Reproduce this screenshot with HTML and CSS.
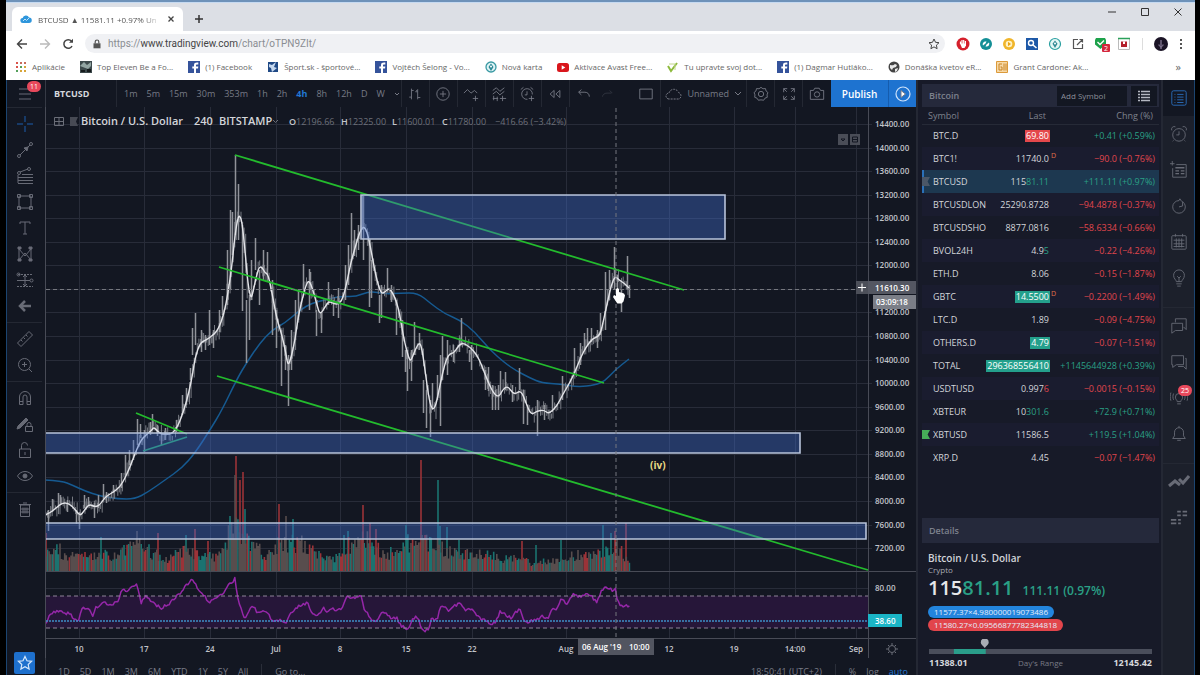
FILE: index.html
```html
<!DOCTYPE html>
<html lang="sk">
<head>
  <meta charset="utf-8">
  <title>BTCUSD ▲ 11581.11 +0.97% Unnamed</title>
  <link rel="stylesheet" href="styles.css">
</head>
<body>
<div class="window">

  <header class="tabstrip">
    <div class="tab">
      <svg width="12" height="12" viewBox="0 0 12 12"><path d="M3 10a2.500 2.500 0 0 1-.3-5A3.300 3.300 0 0 1 9 4.500 2.700 2.700 0 0 1 9 10z" fill="#2f96dc"/><path d="M3 8l2-2 1.500 1.500L9 5" fill="none" stroke="#bfe3fa"/></svg>
      <span class="tab-title">BTCUSD ▲ 11581.11 +0.97% Un</span>
      <button class="plain" aria-label="Close tab"><svg width="8" height="8" viewBox="0 0 8 8"><path d="M1.500 1.500l5 5m0-5l-5 5" stroke="#444" stroke-width="1.300"/></svg></button>
    </div>
    <button class="plain new-tab" aria-label="New tab"><svg width="10" height="10" viewBox="0 0 10 10"><path d="M5 1v8M1 5h8" stroke="#333" stroke-width="1.500"/></svg></button>
    <div class="win-buttons">
      <button class="plain" aria-label="Minimize"><svg width="10" height="10" viewBox="0 0 10 10"><path d="M1 5h8" stroke="#333"/></svg></button>
      <button class="plain" aria-label="Maximize"><svg width="10" height="10" viewBox="0 0 10 10"><path d="M1.500 1.500h7v7h-7z" fill="none" stroke="#333"/></svg></button>
      <button class="plain" aria-label="Close"><svg width="10" height="10" viewBox="0 0 10 10"><path d="M1.500 1.500l7 7m0-7l-7 7" stroke="#333"/></svg></button>
    </div>
  </header>

  <div class="navbar">
    <button class="plain" aria-label="Back"><svg width="12" height="12" viewBox="0 0 12 12"><path d="M11 6H2M6 1.500L1.500 6 6 10.500" fill="none" stroke="#444" stroke-width="1.400"/></svg></button>
    <button class="plain" aria-label="Forward"><svg width="12" height="12" viewBox="0 0 12 12"><path d="M1 6h9M6 1.500L10.500 6 6 10.500" fill="none" stroke="#bbb" stroke-width="1.400"/></svg></button>
    <button class="plain" aria-label="Reload"><svg width="12" height="12" viewBox="0 0 12 12"><path d="M10 8a4.300 4.300 0 1 1-.5-4.800" fill="none" stroke="#444" stroke-width="1.500"/><path d="M11 .8v4H7z" fill="#444"/></svg></button>
    <div class="address">
      <svg width="8" height="10" viewBox="0 0 8 10"><path d="M.5 4.300h7v5h-7z" fill="#555"/><path d="M2.200 4.500V2.800a1.800 1.800 0 0 1 3.600 0v1.700" fill="none" stroke="#555" stroke-width="1.200"/></svg>
      <a href="#chart" class="url">https://<b>www.tradingview.com</b>/chart/oTPN9ZIt/</a>
      <button class="plain star" aria-label="Bookmark this page"><svg width="12" height="12" viewBox="0 0 12 12"><path d="M6 1l1.500 3.300 3.500.4-2.600 2.400.7 3.600L6 8.900l-3.100 1.800.7-3.600L1 4.700l3.500-.4z" fill="none" stroke="#444"/></svg></button>
    </div>
    <div class="extensions">
      <svg viewBox="0 0 14 14"><circle cx="7" cy="7" r="6.500" fill="#d5202c"/><path d="M4.500 7V4.500M6 7V3m1.700 4V3m1.700 4V4" stroke="#fff" stroke-width="1.200"/><path d="M4 6.500h6v2L8.500 11H6z" fill="#fff"/></svg>
      <svg viewBox="0 0 14 14"><circle cx="7" cy="7" r="6" fill="#138f96"/><path d="M4 8.500c-1-2.500 1-4.500 3.500-4l-1 2zM10 5.500c1 2.500-1 4.500-3.500 4l1-2z" fill="#fff"/></svg>
      <svg viewBox="0 0 14 14"><circle cx="7" cy="7" r="6" fill="#f0b52a"/><circle cx="7" cy="7" r="3.300" fill="#fff2c4"/><path d="M6 4.800L9 7 6 9.200z" fill="#eca512"/></svg>
      <svg viewBox="0 0 14 14"><path d="M1 1h12v12H1z" fill="#1d58a7"/><circle cx="6" cy="6" r="2.500" fill="none" stroke="#fff" stroke-width="1.400"/><path d="M8 8l3.500 3" stroke="#fff" stroke-width="1.600"/></svg>
      <svg viewBox="0 0 14 14"><circle cx="7" cy="7" r="5.500" fill="#e4f7f5" stroke="#2a9fa0" stroke-width="1.200"/><path d="M7 3.500l2.500 3.200L7 11 4.500 6.700z" fill="#2f8893"/><circle cx="7" cy="6.500" r="1" fill="#fff"/></svg>
      <svg viewBox="0 0 14 14"><path d="M7 2.500H2.500v9h9V7M8.500 2.500h3v3M11.500 2.500L6 8" fill="none" stroke="#555" stroke-width="1.200"/></svg>
      <svg viewBox="0 0 14 14"><path d="M2 1h9l1 2v4l-5.500 5L1 7.500V3z" fill="#1da24b"/><path d="M3.500 5l2.500 2.500L10 3.500" fill="none" stroke="#fff" stroke-width="1.400"/><rect x="8" y="7" width="8" height="8" rx="1" fill="#d4263c"/><text x="10" y="14" class="ext-num">2</text></svg>
      <svg viewBox="0 0 14 14"><path d="M1.500 1.500h11v11h-11z" fill="#fff" stroke="#bbb"/><path d="M1 1.500h12" stroke="#2aa05a" stroke-width="1.500"/><path d="M4 4.500h6v5.500H4z" fill="#b3202c"/><path d="M6 4.500h2V7H6z" fill="#fff"/></svg>
    </div>
    <span class="nav-sep"></span>
    <svg class="avatar" viewBox="0 0 14 14"><circle cx="7" cy="7" r="7" fill="#1b1426"/><path d="M7 3v6M5 7.500c0 3 4 3 4 0M7 10v2" stroke="#a597b5" fill="none"/></svg>
    <button class="plain" aria-label="Menu"><svg width="4" height="12" viewBox="0 0 4 12"><path d="M1 1h2v2H1zM1 5h2v2H1zM1 9h2v2H1z" fill="#555"/></svg></button>
  </div>

  <nav class="bookmarks">
    <a href="#"><svg viewBox="0 0 12 12"><path d="M1 1h2v2H1zM1 5h2v2H1z" fill="#d9534a"/><path d="M5 1h2v2H5zM9 1h2v2H9z" fill="#c86b5c"/><path d="M5 5h2v2H5zM1 9h2v2H1z" fill="#55a05c"/><path d="M9 5h2v2H9zM5 9h2v2H5zM9 9h2v2H9z" fill="#d7a53a"/></svg>Aplikácie</a>
    <a href="#"><svg viewBox="0 0 12 12"><path d="M0 0h12v12H0z" fill="#3d4a4c"/><path d="M0 5l4-4 3 3 4-3v4L8 8z" fill="#93a6a3"/><path d="M1 9h4v2H1zM7 8h4v3H7z" fill="#151b1c"/></svg>Top Eleven Be a Fo...</a>
    <a href="#"><svg viewBox="0 0 12 12"><path d="M0 0h12v12H0z" fill="#35539b"/><path d="M8 12V7.500h2l.3-2H8V4.400c0-.6.300-1 1-1h1.300V1.600C8 1.200 6 1.800 6 4v1.500H4.300v2H6V12z" fill="#fff"/></svg>(1) Facebook</a>
    <a href="#"><svg viewBox="0 0 12 12"><path d="M1 1h10v10H1z" fill="#204a86"/><path d="M2 3l3 1 4-3-2 5 3 1-5 4-1-4-2-1z" fill="#c5d8ef"/></svg>Šport.sk - športové...</a>
    <a href="#"><svg viewBox="0 0 12 12"><path d="M0 0h12v12H0z" fill="#35539b"/><path d="M8 12V7.500h2l.3-2H8V4.400c0-.6.300-1 1-1h1.300V1.600C8 1.200 6 1.800 6 4v1.500H4.300v2H6V12z" fill="#fff"/></svg>Vojtěch Šelong - Vo...</a>
    <a href="#"><svg viewBox="0 0 12 12"><circle cx="6" cy="6" r="5" fill="#dff4f5" stroke="#3b9aa4" stroke-width="1.300"/><path d="M6 2.500L8.500 6 6 10 3.500 6z" fill="#2b8895"/><circle cx="6" cy="5.500" r="1" fill="#fff"/></svg>Nová karta</a>
    <a href="#"><svg viewBox="0 0 12 12"><rect x="0" y="2" width="12" height="9" rx="2.500" fill="#d9161c"/><path d="M4.700 4.300v4.400L8.300 6.500z" fill="#fff"/></svg>Aktivace Avast Free...</a>
    <a href="#"><svg viewBox="0 0 12 12"><path d="M1 5l3 5 6-8" fill="none" stroke="#8dba3c" stroke-width="2"/><path d="M2 3h6v6" fill="none" stroke="#c2d68e"/></svg>Tu upravte svoj dot...</a>
    <a href="#"><svg viewBox="0 0 12 12"><path d="M0 0h12v12H0z" fill="#35539b"/><path d="M8 12V7.500h2l.3-2H8V4.400c0-.6.300-1 1-1h1.300V1.600C8 1.200 6 1.800 6 4v1.500H4.300v2H6V12z" fill="#fff"/></svg>(1) Dagmar Hutláko...</a>
    <a href="#"><svg viewBox="0 0 12 12"><circle cx="6" cy="6" r="5.500" fill="#444"/><path d="M2 4c2 0 3 1 5-1l2 1-1 2-3 1-1 2-2-2zM7 8l3-1-1 3-2 1z" fill="#e8e8e8"/></svg>Donáška kvetov eR...</a>
    <a href="#"><svg viewBox="0 0 12 12"><path d="M.5.500h11v11H.5z" fill="#f7d9a6" stroke="#dc9a3a"/><path d="M6 3H3v6h3V6H4.500M8 2.500v7M10 2.500v7" fill="none" stroke="#c98426"/></svg>Grant Cardone: Ak...</a>
    <button class="plain more" aria-label="More bookmarks">»</button>
  </nav>

  <main class="app">
    <aside class="tools">
      <button class="tool menu" aria-label="Menu"><svg viewBox="0 0 18 18"><path d="M3 4h12M3 9h12M3 14h12"/></svg><span class="badge">11</span></button>
      <div class="tool-group">
        <button class="tool active" aria-label="Cross"><svg viewBox="0 0 18 18"><path d="M9 1v6M9 11v6M1 9h6M11 9h6"/></svg></button>
        <button class="tool" aria-label="Trend line"><svg viewBox="0 0 18 18"><circle cx="3" cy="15" r="1.500"/><circle cx="15" cy="3" r="1.500"/><path d="M4 14L14 4"/><path d="M8 7l4-1-1 4z" fill="currentColor"/></svg></button>
        <button class="tool" aria-label="Fib retracement"><svg viewBox="0 0 18 18"><circle cx="3" cy="6" r="1.500"/><circle cx="13" cy="2" r="1.500"/><path d="M4 5l8-3M6 7.500h11M2 10.500h15M2 13.500h15M2 16.500h15M2 8v8"/></svg></button>
        <button class="tool" aria-label="Rectangle"><svg viewBox="0 0 18 18"><path d="M3 3h12v12H3z"/><path d="M1.500 1.500h3v3h-3zM13.500 1.500h3v3h-3zM1.500 13.500h3v3h-3zM13.500 13.500h3v3h-3z"/></svg></button>
        <button class="tool" aria-label="Text"><svg viewBox="0 0 18 18"><path d="M4 5V3h10v2M9 3v12M7 15h4"/></svg></button>
        <button class="tool" aria-label="Pattern"><svg viewBox="0 0 18 18"><path d="M3 15V4l6 7 6-7v11L9 8z"/><path d="M2 14h3v2H2zM13 14h3v2h-3zM2 2h3v2H2zM13 2h3v2h-3z" fill="currentColor"/></svg></button>
        <button class="tool" aria-label="Long position"><svg viewBox="0 0 18 18"><path d="M2 3.500h15M1 15.500h16" stroke-dasharray="2 1"/><path d="M1 9.500h13M9 4v11M7 6l2-2 2 2M7 13l2 2 2-2"/><circle cx="15.500" cy="9.500" r="1.500"/><circle cx="2.500" cy="3.500" r="1.500"/></svg></button>
        <button class="tool" aria-label="Arrow"><svg viewBox="0 0 18 18"><path d="M15 9H5M9 4L4 9l5 5" stroke-width="2.500"/></svg></button>
      </div>
      <div class="tool-group">
        <button class="tool" aria-label="Measure"><svg viewBox="0 0 18 18"><path d="M1.500 13L13 1.500 16.500 5 5 16.500zM5 10l1.500 1.500M7.500 7.500L9 9M10 5l1.500 1.500"/></svg></button>
        <button class="tool" aria-label="Zoom in"><svg viewBox="0 0 18 18"><circle cx="8.500" cy="8.500" r="6"/><path d="M6 8.500h5M8.500 6v5M13 13l3 3"/></svg></button>
      </div>
      <div class="tool-group">
        <button class="tool" aria-label="Magnet"><svg viewBox="0 0 18 18"><path d="M3.500 15.500V8a5.500 5.500 0 0 1 11 0v7.500h-3.500V8a2 2 0 0 0-4 0v7.500zM3.500 12.500H7M11 12.500h3.500"/></svg></button>
        <button class="tool" aria-label="Keep drawing"><svg viewBox="0 0 18 18"><path d="M2 11l8-8 2 2-8 8-3 1z" fill="currentColor"/><path d="M9.500 11.500h7v5h-7zM11 11.500V9.500a2 2 0 0 1 4 0v2"/></svg></button>
        <button class="tool" aria-label="Lock drawings"><svg viewBox="0 0 18 18"><path d="M3.500 8h11v8.500h-11zM5.500 8V4.500a3 3 0 0 1 6 0M9 11v3"/></svg></button>
        <button class="tool" aria-label="Hide drawings"><svg viewBox="0 0 18 18"><path d="M1.500 9c3.500-6 11.500-6 15 0-3.500 6-11.500 6-15 0z"/><circle cx="9" cy="9" r="2" fill="currentColor"/></svg></button>
      </div>
      <div class="tool-group">
        <button class="tool" aria-label="Remove drawings"><svg viewBox="0 0 18 18"><path d="M4.500 5h9v11.500h-9zM3 4.500h12M7 3h4M7 7.500v6M9 7.500v6M11 7.500v6M5 9h8M5 12h8"/></svg></button>
      </div>
      <button class="favorite" aria-label="Favorite tools"><svg width="16" height="16" viewBox="0 0 16 16"><path d="M8 1.500l2 4.300 4.600.5-3.400 3.200.9 4.600L8 11.800l-4.100 2.300.9-4.600-3.400-3.200 4.600-.5z" fill="none" stroke="#d7e8fb" stroke-width="1.200"/></svg></button>
    </aside>

    <section class="center">
      <div class="topbar">
        <button class="symbol">BTCUSD</button>
        <div class="intervals">
          <button>1m</button><button>5m</button><button>15m</button><button>30m</button><button>353m</button><button>1h</button><button>2h</button><button class="on">4h</button><button>8h</button><button>12h</button><button>D</button><button>W</button>
          <button aria-label="More intervals"><svg width="6" height="6" viewBox="0 0 6 6"><path d="M1 2l2 2 2-2"/></svg></button>
        </div>
        <button class="cell" aria-label="Bar style"><svg viewBox="0 0 18 18"><path d="M5 3v12M2.500 12.500H5M5 5h2.500M12 4v11M9.500 6.500H12M12 13h3M12 4l-2 2"/></svg></button>
        <button class="cell" aria-label="Compare"><svg viewBox="0 0 18 18"><circle cx="9" cy="9" r="7"/><path d="M5.500 9h7M9 5.500v7"/></svg></button>
        <button class="cell" aria-label="Indicators"><svg viewBox="0 0 18 18"><path d="M1 8l4-4 4 4 4-3 3 3M11 14h6M14 11v6"/></svg></button>
        <button class="cell" aria-label="Templates"><svg viewBox="0 0 18 18"><path d="M2 5l4-3 4 4 5-4M2 9l4-3 4 4 5-4M3 11v5M7 12v5M2 14h6M10 14h7M13 11v6"/></svg></button>
        <button class="cell" aria-label="Alert"><svg viewBox="0 0 18 18"><path d="M9.500 15A6 6 0 1 1 15 9.500M9 6v4H6.500M2 4l3-2.500M13 1.500L16 4M11 14h6M14 11v6"/></svg></button>
        <button class="cell" aria-label="Replay"><svg viewBox="0 0 18 18"><path d="M8 5v8L3.500 9zM14.500 5v8L10 9z"/></svg></button>
        <button class="cell last" aria-label="Undo"><svg viewBox="0 0 18 18"><path d="M3 7h7c3 0 5 2 5 5M6 4L3 7l3 3"/></svg></button>
        <button class="cell faded" aria-label="Redo"><svg viewBox="0 0 18 18"><path d="M14 8H9c-3 0-5 2-5 4M12 5l3 3"/></svg></button>
        <span class="spacer"></span>
        <button class="cell" aria-label="Layout"><svg viewBox="0 0 18 18"><path d="M2 3.500h14v11H2z"/></svg></button>
        <button class="layout-name"><svg width="18" height="14" viewBox="0 0 18 14"><path d="M4 12a3 3 0 0 1 0-6 5 5 0 0 1 9.500-.5A3.500 3.500 0 0 1 14 12z" stroke-dasharray="2 1"/></svg>Unnamed<svg width="8" height="6" viewBox="0 0 8 6"><path d="M1 1l3 3 3-3"/></svg></button>
        <button class="cell" aria-label="Settings"><svg viewBox="0 0 18 18"><path d="M9 1.500l2.200 1.600 2.800-.2.700 2.700 2.100 1.800-1 2.600.3 2.700-2.600 1-1.500 2.300L9 15.600 6 16l-1.500-2.300-2.600-1 .3-2.700-1-2.600 2.100-1.800.7-2.700 2.800.2z"/><circle cx="9" cy="9" r="3"/></svg></button>
        <button class="cell" aria-label="Fullscreen"><svg viewBox="0 0 18 18"><path d="M3 7V3h4M3 3l3.500 3.500M15 7V3h-4M15 3l-3.500 3.500M3 11v4h4M3 15l3.500-3.500M15 11v4h-4M15 15l-3.500-3.500"/></svg></button>
        <button class="cell last" aria-label="Snapshot"><svg viewBox="0 0 18 18"><path d="M1.500 5H5l1.500-2.500h5L13 5h3.500v10h-15z"/><circle cx="9" cy="9.500" r="3"/></svg></button>
        <button class="publish">Publish</button>
        <button class="play" aria-label="Start streaming"><svg width="18" height="18" viewBox="0 0 18 18"><circle cx="9" cy="9" r="7" fill="none" stroke="#cfe3fb" stroke-width="1.200"/><path d="M7 5.500l4.500 3.500L7 12.500z" fill="#fff"/></svg></button>
      </div>

      <svg id="chart" class="chart" viewBox="45 107 871 551">
        <g id="grid" class="grid"></g>
        <rect class="rsi-band" x="46" y="596" width="822" height="32"/>
        <path id="volUp" class="vol-up"/>
        <path id="volDown" class="vol-down"/>
        <path id="volMix" class="vol-mix"/>
        <path id="slowMa" class="slow-ma"/>
        <path id="dimBars" class="dim-bars"/>
        <path id="brightBars" class="bright-bars"/>
        <path id="fastMa" class="fast-ma"/>
        <path class="trend" d="M235 155L684 290M219 267L604 383M217 376L868 570M136 413L187 434"/>
        <path class="trend teal" d="M143 451L187 437"/>
        <path class="zone" d="M361 195h364v44H361z"/>
        <path class="zone" d="M44 433h756v20H44z"/>
        <path class="zone" d="M44 523h822v16H44z"/>
        <path id="rsi" class="rsi"/>
        <path class="band-line" d="M46 596h822M46 628h822"/>
        <path class="rsi-last" d="M46 621h822"/>
        <path class="cross" d="M46 289.500h814M616 108v530"/>
        <path class="edge" d="M45.500 107v551M46 571.500h870M46 638.500h870M868.500 107v551"/>
        <text class="wave" x="650" y="469">(iv)</text>

        <g class="icon-lines">
          <path d="M54.500 117.500h9v8h-9zM59 117.500v8M54.500 121.500h9"/>
          <path d="M70 117h8l-2 4.500 2 4.500h-8z" class="flag"/>
          <path d="M273 120l2.500 2.500 2.500-2.500"/>
        </g>
        <text class="title" x="81" y="125">Bitcoin / U.S. Dollar</text>
        <text class="title" x="194" y="125">240</text>
        <text class="title" x="219" y="125">BITSTAMP</text>
        <g class="ohlc">
          <text x="289" y="125"><tspan class="key">O</tspan>12196.66</text>
          <text x="341" y="125"><tspan class="key">H</tspan>12325.00</text>
          <text x="392" y="125"><tspan class="key">L</tspan>11600.01</text>
          <text x="442" y="125"><tspan class="key">C</tspan>11780.00</text>
          <text x="495" y="125">−416.66 (−3.42%)</text>
        </g>
        <g class="pane-buttons">
          <rect x="838" y="134" width="10" height="11"/><rect x="850" y="134" width="10" height="11"/>
          <path d="M841 139h4l-2 2zM852.500 137h5v5h-5zM852.500 139.500h5"/>
        </g>

        <g id="labels" class="axis"></g>
        <path d="M856 281h13v13h-13z" class="tag-dark"/>
        <path d="M858 287.500h8M862 283.500v8" class="tag-plus"/>
        <path d="M868 281h48v13h-48z" class="tag-mid"/>
        <text class="tag-text" x="875" y="291">11610.30</text>
        <path d="M873 295h43v14h-43z" class="tag-light"/>
        <text class="tag-text" x="876" y="305">03:09:18</text>
        <path d="M868 614h34v13h-34z" class="tag-cyan"/>
        <text class="tag-text" x="875" y="624">38.60</text>
        <path d="M578 638h76v17h-76z" class="tag-time"/>
        <text class="tag-text" x="582" y="650">06 Aug '19</text>
        <text class="tag-text" x="629" y="650">10:00</text>
        <g class="icon-lines"><circle cx="892" cy="649" r="3.500"/><path d="M892 643v2M892 653v2M886 649h2M896 649h2M888 645l1 1M895 652l1 1M888 653l1-1M895 646l1-1"/></g>
        <path class="hand" d="M617 303l-4-6 1-2 2 1v-7l1.500-1 1.500 1v3l5 1.500 1 2-1.500 6-2 2h-4z"/>
      </svg>

      <footer class="bottombar">
        <button>1D</button><button>5D</button><button>1M</button><button>3M</button><button>6M</button><button>YTD</button><button>1Y</button><button>5Y</button><button>All</button>
        <span class="line"></span>
        <button>Go to...</button>
        <span class="spacer"></span>
        <span>18:50:41 (UTC+2)</span>
        <span class="line"></span>
        <button>%</button><button>log</button><button class="on">auto</button>
      </footer>
    </section>

    <aside class="panel">
      <div class="panel-head">
        <h2>Bitcoin</h2>
        <input type="text" placeholder="Add Symbol" aria-label="Add Symbol">
        <button aria-label="Watchlist menu"><svg width="14" height="12" viewBox="0 0 14 12"><path d="M1 1.500h2M4 1.500h9M1 4.500h2M4 4.500h9M1 7.500h2M4 7.500h9M1 10.500h2M4 10.500h9" stroke="#b4b7c1" stroke-width="1.400"/></svg></button>
      </div>
      <table class="watchlist">
        <thead><tr><th>Symbol</th><th>Last</th><th>Chng (%)</th></tr></thead>
        <tbody>
          <tr><td>BTC.D</td><td><mark class="bg-down">69.80</mark></td><td class="up">+0.41 (+0.59%)</td></tr>
          <tr><td>BTC1!</td><td>11740.0<sup>D</sup></td><td class="down">−90.0 (−0.76%)</td></tr>
          <tr class="selected"><td><i class="flag-mark"></i>BTCUSD</td><td>115<span class="up">81.11</span></td><td class="up">+111.11 (+0.97%)</td></tr>
          <tr><td><span class="clip">BTCUSDLONGS</span></td><td>25290.8728</td><td class="down">−94.4878 (−0.37%)</td></tr>
          <tr><td><span class="clip">BTCUSDSHORTS</span></td><td>8877.0816</td><td class="down">−58.6334 (−0.66%)</td></tr>
          <tr><td>BVOL24H</td><td>4.9<span class="up">5</span></td><td class="down">−0.22 (−4.26%)</td></tr>
          <tr><td>ETH.D</td><td>8.06</td><td class="down">−0.15 (−1.87%)</td></tr>
          <tr><td>GBTC</td><td><mark class="bg-up">14.5500</mark><sup>D</sup></td><td class="down">−0.2200 (−1.49%)</td></tr>
          <tr><td>LTC.D</td><td>1.89</td><td class="down">−0.09 (−4.75%)</td></tr>
          <tr><td>OTHERS.D</td><td><mark class="bg-up">4.79</mark></td><td class="down">−0.07 (−1.51%)</td></tr>
          <tr><td>TOTAL</td><td><mark class="bg-up">296368556410</mark></td><td class="up">+1145644928 (+0.39%)</td></tr>
          <tr><td>USDTUSD</td><td>0.997<span class="down">6</span></td><td class="down">−0.0015 (−0.15%)</td></tr>
          <tr><td>XBTEUR</td><td>10<span class="up">301.6</span></td><td class="up">+72.9 (+0.71%)</td></tr>
          <tr><td><i class="flag-mark green"></i>XBTUSD</td><td>11586.5</td><td class="up">+119.5 (+1.04%)</td></tr>
          <tr><td>XRP.D</td><td>4.45</td><td class="down">−0.07 (−1.47%)</td></tr>
        </tbody>
      </table>
      <div class="details">
        <h2>Details</h2>
        <h3>Bitcoin / U.S. Dollar</h3>
        <p class="kind">Crypto</p>
        <p class="price">115<span class="up">81.11</span><small class="up">111.11 (0.97%)</small></p>
        <span class="pill bid">11577.37×4.980000019073486</span>
        <span class="pill ask">11580.27×0.09566877782344818</span>
        <svg class="range" viewBox="0 0 224 16" preserveAspectRatio="none"><path d="M0 10h224v5H0z" fill="#4a4e5b"/><path d="M25 10h32v5H25z" fill="#2a9d8a"/><path d="M52 3.500a3.500 3.500 0 0 1 8 0c0 2-2 3-4 5.500-2-2.500-4-3.500-4-5.500z" fill="#a9acb4"/></svg>
        <div class="range-labels"><b>11388.01</b><span>Day's Range</span><b>12145.42</b></div>
      </div>
    </aside>

    <aside class="rail">
      <div>
        <button class="on" aria-label="Watchlist"><svg viewBox="0 0 20 20"><rect x="2" y="2" width="16" height="16" rx="2"/><path d="M5 6h1M8 6h7M5 9h1M8 9h7M5 12h1M8 12h7M5 15h1M8 15h7"/></svg></button>
        <button aria-label="Alerts"><svg viewBox="0 0 20 20"><circle cx="10" cy="11" r="7"/><path d="M10 7v4H7M2 6a3 3 0 0 1 4-4M18 6a3 3 0 0 0-4-4M4 17l-1 1M16 17l1 1"/></svg></button>
        <button aria-label="News"><svg viewBox="0 0 20 20"><path d="M7 4h11v14H3V8" /><path d="M6 7.500h10M6 11h4M6 14h4M12 11h4M12 14h4" stroke-width="1.500"/><path d="M0 3h5M2.500 0v5"/></svg></button>
        <button aria-label="Hotlists"><svg viewBox="0 0 20 20"><path d="M10 4a7 7 0 1 0 7 7M10 4l1-2 2 3M17 11c0-3-2-5-3-6v5l-4 1"/></svg></button>
        <button aria-label="Calendar"><svg viewBox="0 0 20 20"><rect x="2" y="3" width="16" height="15" rx="1"/><path d="M6 1v3M14 1v3M4 8h12M4 12h12M4 15h12M7 6v10M10 6v10M13 6v10"/></svg></button>
        <button aria-label="Ideas"><svg viewBox="0 0 20 20"><path d="M7 14c0-2-3-3-3-7a6 6 0 0 1 12 0c0 4-3 5-3 7zM7 16.500h6M8 19h4M8 8l2 2 2-2M10 10v4"/></svg></button>
      </div>
      <div>
        <button aria-label="Public chats"><svg viewBox="0 0 20 20"><path d="M6 6V2h12v12l-3-3M2 7h12v8H6l-4 3z"/></svg></button>
        <button aria-label="Private chats"><svg viewBox="0 0 20 20"><path d="M2 3h13v10H7l-4 3v-3H2zM17 6h1v12l-3-3H9"/></svg></button>
        <button aria-label="Ideas stream"><svg viewBox="0 0 20 20"><path d="M8 14c0-2-2-2-2-5a4 4 0 0 1 8 0c0 3-2 3-2 5zM8 16.500h4M4 5c-1 2-1 5 0 7M1 4c-1 3-1 6 0 9M16 5c1 2 1 5 0 7M19 4c1 3 1 6 0 9"/></svg><span class="badge">25</span></button>
        <button aria-label="Notifications"><svg viewBox="0 0 20 20"><path d="M3 15h14l-2-3V8a5 5 0 0 0-10 0v4zM8 17h4M10 1v2"/></svg></button>
      </div>
      <div>
        <button class="big" aria-label="Order panel"><svg viewBox="0 0 22 20"><path d="M1 14l6-5 5 4M11 7l4 4 6-7" stroke-width="3"/></svg></button>
        <button aria-label="Depth of market"><svg viewBox="0 0 20 20"><path d="M8 3h4M14 3h5M8 7h4M14 7h5M1 12h6M9 12h3M1 16h6M9 16h3" stroke-width="2"/></svg></button>
      </div>
    </aside>
  </main>
</div>
<script src="chart.js"></script>
</body>
</html>
```
FILE: styles.css
```css
* { box-sizing: border-box; }
body {
  margin: 0;
  background: #000;
  font-family: "Open Sans", "Noto Sans", sans-serif;
  font-size: 9px;
  overflow: hidden;
}
button {
  font: inherit;
  color: inherit;
  background: none;
  border: 0;
  padding: 0;
}
svg { display: block; flex: none; }
h2, h3, p { margin: 0; }
.window {
  display: flex;
  flex-direction: column;
  height: 100vh;
  margin: 0 5px 0 6px;
  background: #131722;
  border-top: 2px solid #6e92b9;
}
.plain { display: flex; align-items: center; }

/* browser frame */
.tabstrip {
  display: flex;
  height: 29px;
  flex: none;
  padding: 4px 12px 0 6px;
  background: #dcdfe5;
  border-top: 1px solid #c6daf1;
}
.tab {
  display: flex;
  align-items: center;
  gap: 6px;
  width: 171px;
  padding: 0 8px;
  background: #fff;
  border-radius: 6px 6px 0 0;
}
.tab-title {
  flex: 1;
  white-space: nowrap;
  color: #555;
  font-size: 8px;
  mask-image: linear-gradient(90deg, #000 85%, transparent);
}
.new-tab { margin-left: 11px; }
.win-buttons {
  display: flex;
  align-items: flex-start;
  gap: 23px;
  margin-left: auto;
}
.navbar {
  display: flex;
  align-items: center;
  gap: 11px;
  height: 25px;
  flex: none;
  padding: 0 12px 0 10px;
  background: #fff;
}
.address {
  display: flex;
  align-items: center;
  gap: 7px;
  flex: 1;
  height: 19px;
  padding: 0 5px 0 8px;
  border-radius: 10px;
  background: #f0f1f4;
}
.url {
  color: #8a8d92;
  font-family: Roboto, sans-serif;
  font-size: 10px;
  text-decoration: none;
}
.url b { color: #444; font-weight: 400; }
.star { margin-left: auto; }
.extensions { display: flex; gap: 9px; }
.extensions svg { width: 14px; height: 14px; overflow: visible; }
.ext-num { font-size: 7px; fill: #fff; }
.nav-sep { width: 1px; height: 12px; background: #ddd; }
.avatar { width: 14px; height: 14px; }
.bookmarks {
  display: flex;
  align-items: center;
  justify-content: space-between;
  height: 24px;
  flex: none;
  padding: 0 14px 3px 9px;
  background: #fff;
  font-size: 8px;
  color: #666;
}
.bookmarks a {
  display: flex;
  align-items: center;
  gap: 5px;
  color: inherit;
  text-decoration: none;
  white-space: nowrap;
}
.bookmarks svg { width: 12px; height: 12px; }
.more { margin-left: 72px; font-size: 11px; }

/* app */
.app {
  display: flex;
  flex: 1;
  min-height: 0;
  border: solid #1c4570;
  border-width: 0 1px;
  color: #787b86;
}
.app svg { fill: none; stroke: currentColor; stroke-width: 1; }
.badge {
  position: absolute;
  top: 1px;
  right: 1px;
  padding: 0 3px;
  border-radius: 6px;
  background: #e8495c;
  color: #fff;
  font-size: 7px;
  line-height: 11px;
}
.tools {
  display: flex;
  flex-direction: column;
  width: 38px;
  flex: none;
  padding-right: 3px;
  color: #686b76;
}
.tool {
  position: relative;
  display: flex;
  align-items: center;
  justify-content: center;
  height: 26px;
  width: 100%;
}
.tool svg { width: 18px; height: 18px; }
.tool.active { color: #1c5fae; }
.menu { height: 28px; border-bottom: 1px solid #242833; }
.tool-group { padding: 3px 0; border-bottom: 1px solid #242833; }
.tool-group:nth-last-child(2) { border: 0; }
.favorite {
  display: flex;
  align-items: center;
  justify-content: center;
  width: 21px;
  height: 22px;
  margin: auto auto 1px 7px;
  border-radius: 2px;
  background: #1e70cd;
}
.center {
  display: flex;
  flex-direction: column;
  flex: 1;
  min-width: 0;
  overflow: hidden;
}
.topbar {
  display: flex;
  align-items: stretch;
  height: 27px;
  flex: none;
  white-space: nowrap;
  border-left: 1px solid #363a45;
}
.symbol {
  width: 71px;
  padding-left: 8px;
  border-right: 1px solid #242833;
  color: #d5d7dc;
  font-weight: 700;
  text-align: left;
}
.intervals {
  display: flex;
  gap: 9px;
  padding: 0 1px 0 7px;
  border-right: 1px solid #242833;
}
.intervals .on { color: #2277d4; font-weight: 700; }
.cell {
  display: flex;
  align-items: center;
  justify-content: center;
  width: 28px;
  border-right: 1px solid #242833;
}
.cell svg { width: 16px; height: 16px; }
.last, .faded { border: 0; }
.faded { width: 18px; opacity: .3; }
.spacer { flex: 1; }
.layout-name {
  display: flex;
  align-items: center;
  gap: 5px;
  padding: 0 4px;
  border-right: 1px solid #242833;
}
.publish {
  width: 57px;
  background: #1e73d0;
  color: #fff;
  font-size: 10px;
  font-weight: 600;
}
.play {
  display: flex;
  align-items: center;
  justify-content: center;
  width: 28px;
  border-left: 1px solid #155cae;
  background: #1e73d0;
}

/* chart */
.chart { width: 100%; height: auto; }
.chart path, .chart text, .chart rect { stroke: none; }
.chart .grid path { stroke: #282c39; }
.chart .rsi-band { fill: #261639; }
.chart .vol-up { stroke: #1b7370; stroke-width: 1.600; }
.chart .vol-down { stroke: #9b3338; stroke-width: 1.600; }
.chart .vol-mix { stroke: #584d4d; stroke-width: 1.600; }
.chart .slow-ma { stroke: #165a91; stroke-width: 1.500; }
.chart .dim-bars { stroke: #777a82; }
.chart .bright-bars { stroke: #909299; stroke-width: 1.500; }
.chart .fast-ma { stroke: #e3e4e8; stroke-width: 1.400; stroke-linejoin: round; }
.chart .trend { stroke: #23bb2d; stroke-width: 1.800; }
.chart .teal { stroke: #28a566; }
.chart .zone { fill: #426ece; fill-opacity: .4; stroke: #b8c3da; stroke-width: 1.600; }
.chart .rsi { stroke: #9527a8; stroke-width: 1.500; stroke-linejoin: round; }
.chart .band-line { stroke: #8f8499; stroke-dasharray: 4 3; }
.chart .rsi-last { stroke: #3e8fc6; stroke-width: 1.500; stroke-dasharray: 2 1; }
.chart .cross { stroke: #75777e; stroke-dasharray: 4 3; }
.chart .edge { stroke: #484b56; }
.chart .wave { fill: #ecdd86; font-size: 10px; font-weight: 700; }
.title { fill: #d3d5da; font-size: 11px; font-weight: 600; }
.ohlc { fill: #6d707a; font-size: 9px; }
.key { fill: #c4c6cc; font-weight: 600; }
.chart .icon-lines path, .chart .icon-lines circle { stroke: #6b6e78; }
.chart .icon-lines .flag { fill: #474a54; stroke: none; }
.pane-buttons rect { fill: #4a4d57; }
.chart .pane-buttons path { stroke: #131722; }
.axis { fill: #c2c4ca; font-size: 8px; font-weight: 600; }
.axis .mid { text-anchor: middle; }
.tag-text { fill: #fff; font-size: 8px; font-weight: 600; }
.tag-dark { fill: #4c4f59; }
.chart .tag-plus { stroke: #fff; }
.tag-mid { fill: #545762; }
.tag-light { fill: #7b7e87; }
.tag-cyan { fill: #1ab5c6; }
.tag-time { fill: #525560; }
.hand { fill: #fff; }

.bottombar {
  display: flex;
  align-items: center;
  gap: 10px;
  height: 26px;
  flex: none;
  padding: 0 8px 0 12px;
  border-left: 1px solid #363a45;
  white-space: nowrap;
}
.bottombar .on { color: #2277d4; }
.line { width: 1px; height: 14px; margin: 0 3px; background: #2a2e39; }

/* right panel */
.panel {
  display: flex;
  flex-direction: column;
  width: 247px;
  flex: none;
  padding: 4px 2px 0 4px;
  background: #171a28;
  border: solid #242834;
  border-width: 0 2px;
}
.panel-head {
  display: flex;
  align-items: center;
  gap: 4px;
  height: 23px;
  flex: none;
  padding: 1px 2px 1px 7px;
  background: #25293b;
}
.panel h2 { flex: 1; color: #7d818d; font-size: 9px; font-weight: 600; }
.panel-head input {
  width: 70px;
  height: 20px;
  padding: 0 4px;
  border: 0;
  background: #131722;
  color: #b2b5be;
  font: inherit;
  font-size: 8px;
}
.panel-head input::placeholder { color: #8d909a; }
.panel-head button {
  display: flex;
  align-items: center;
  justify-content: center;
  width: 26px;
  height: 20px;
  background: #131722;
}
.watchlist {
  width: 100%;
  border-collapse: collapse;
  table-layout: fixed;
  white-space: nowrap;
}
.watchlist th {
  height: 17px;
  padding: 0 6px;
  border-bottom: 1px solid #262a37;
  color: #7f828d;
  font-weight: 400;
  text-align: right;
}
.watchlist th:first-child { width: 64px; text-align: left; }
.watchlist th:nth-child(2) { width: 70px; padding-right: 10px; }
.watchlist td {
  position: relative;
  height: 23px;
  padding: 0 4px 0 0;
  text-align: right;
  color: #d3d5da;
}
.watchlist td:first-child { padding: 0 0 0 11px; text-align: left; }
.watchlist td:nth-child(2) { padding-right: 7px; }
.watchlist tbody tr:nth-child(even) { background: #1a1c2f; }
.watchlist .selected { background: #1d3850; box-shadow: inset 2px 0 #2b70b8; }
.clip { display: block; overflow: hidden; }
.watchlist sup {
  position: absolute;
  top: 5px;
  right: 0;
  color: #e0704a;
  font-size: 7px;
  line-height: 8px;
}
mark {
  display: inline-block;
  margin-right: -1px;
  padding: 0 1px;
  color: #fff;
  line-height: 12px;
}
.bg-down { background: #e4484b; }
.bg-up { background: #24a08c; }
.panel .up { color: #2aa086; }
.panel .down { color: #e0464d; }
.flag-mark {
  position: absolute;
  top: 7px;
  left: 0;
  width: 8px;
  height: 9px;
  background: #4b5767;
  clip-path: polygon(0 0, 100% 0, 70% 50%, 100% 100%, 0 100%);
}
.flag-mark.green { background: #46ad58; }
.details { margin-top: auto; }
.details h2 {
  height: 25px;
  padding-left: 7px;
  background: #25293b;
  line-height: 25px;
}
.details h3 {
  margin: 8px 6px 0;
  color: #d1d3d8;
  font-size: 10px;
  font-weight: 600;
  line-height: 14px;
}
.kind { margin: 0 6px; color: #a8abb3; font-size: 8px; line-height: 10px; }
.price {
  margin: 0 6px 2px;
  color: #e6e7ea;
  font-size: 20px;
  font-weight: 600;
  line-height: 26px;
}
.price small { margin-left: 9px; font-size: 12px; }
.pill {
  display: block;
  width: fit-content;
  margin: 0 6px 1px;
  padding: 0 6px;
  border-radius: 6px;
  color: #e4eefb;
  font-size: 8px;
  line-height: 12px;
}
.bid { background: #2385dd; }
.ask { background: #e2454b; }
.panel .range { width: calc(100% - 14px); height: 16px; margin: 8px 7px 0; stroke: none; }
.range-labels {
  display: flex;
  justify-content: space-between;
  margin: 0 7px;
  padding-bottom: 5px;
  font-size: 8px;
  line-height: 15px;
}
.range-labels b { color: #d5d7dc; font-size: 9px; }

.rail { width: 31px; flex: none; background: #1c202b; color: #686b76; }
.rail div + div { margin-top: 11px; border-top: 1px solid #242833; }
.rail button {
  position: relative;
  display: flex;
  align-items: center;
  justify-content: center;
  width: 100%;
  height: 36px;
}
.rail svg { width: 18px; height: 18px; }
.rail .big svg { width: 22px; height: 20px; }
.rail .badge { top: 5px; right: 2px; }
.rail .on { background: #131722; color: #2a6fc0; }
```
FILE: chart.js
```js
const $ = id => document.getElementById(id);

// average price line
const fast = [[45,515],[50,513],[56,508],[62,503],[68,503],[74,508],[80,516],[84,511],[89,504],[95,507],[100,505],[105,497],[112,493],[120,487],[125,478],[130,467],[136,451],[141,440],[146,435],[152,430],[154,427],[160,434],[166,434],[172,434],[178,426],[184,410],[189,392],[193,372],[195,358],[200,343],[206,340],[212,336],[218,330],[224,314],[228,293],[232,265],[235,235],[238,217],[240,216],[242,222],[245,250],[248,285],[251,299],[253,292],[256,278],[259,267],[262,267],[265,273],[268,274],[272,293],[277,320],[282,335],[286,354],[288,366],[291,358],[295,340],[298,318],[302,300],[306,285],[309,280],[313,290],[317,305],[320,315],[325,307],[329,301],[334,304],[339,304],[343,298],[347,282],[351,262],[355,248],[359,234],[363,226],[367,231],[371,250],[376,277],[381,294],[385,292],[389,288],[394,295],[399,310],[404,340],[409,359],[411,361],[415,350],[420,341],[423,355],[427,385],[430,404],[433,410],[436,405],[440,385],[445,363],[449,354],[454,353],[459,345],[463,343],[470,347],[477,355],[482,366],[488,382],[494,394],[499,397],[503,389],[508,386],[514,395],[521,390],[526,403],[531,415],[537,411],[544,410],[549,414],[557,406],[563,394],[569,384],[575,372],[580,359],[586,347],[593,338],[600,336],[604,318],[608,300],[611,286],[615,276],[619,280],[624,283],[629,288]];
const slow = [[45,480],[62,481],[72,485],[85,491],[100,496],[118,499],[135,499],[148,492],[165,480],[182,468],[195,453],[210,430],[222,410],[237,379],[247,362],[260,343],[272,330],[285,323],[300,310],[312,303],[325,300],[340,296],[355,297],[370,291],[385,294],[400,293],[418,293],[430,303],[445,314],[460,320],[475,332],[490,350],[505,363],[515,370],[530,378],[542,383],[560,384],[578,387],[595,385],[605,381],[615,370],[629,359]];
// x, high, low
const wicks = [[48,510,531],[52,499,512],[58,493,508],[60,495,505],[67,500,512],[76,510,524],[79,512,529],[84,495,508],[88,497,506],[94,503,518],[98,495,508],[103,484,500],[106,492,503],[113,485,493],[121,473,488],[125,455,475],[129,450,465],[133,440,460],[137,419,445],[140,424,438],[144,430,452],[150,422,435],[152,414,430],[157,425,436],[161,433,445],[165,428,440],[176,420,432],[182,395,415],[186,388,405],[190,368,380],[192,328,355],[195,313,345],[201,330,352],[205,335,350],[209,310,345],[213,330,348],[219,310,332],[222,296,315],[227,250,305],[230,210,290],[232,212,255],[235,155,235],[238,184,240],[242,225,311],[246,300,363],[249,295,340],[251,260,300],[255,238,270],[259,270,305],[263,250,280],[267,252,275],[272,280,335],[276,310,348],[281,330,386],[285,345,370],[288,355,406],[291,330,370],[295,300,340],[298,290,320],[303,264,290],[309,269,310],[310,272,290],[316,310,336],[321,312,333],[328,282,305],[333,300,316],[338,288,318],[345,265,300],[348,245,285],[351,213,260],[354,230,256],[358,225,250],[362,195,230],[363,196,260],[369,240,307],[371,260,298],[379,295,323],[381,285,318],[387,268,290],[391,285,302],[396,300,335],[402,320,357],[405,350,372],[407,350,391],[411,350,381],[414,322,355],[419,333,350],[423,380,413],[426,390,428],[430,400,437],[432,383,410],[437,375,400],[440,355,426],[442,336,380],[447,340,375],[453,345,362],[459,338,352],[461,318,345],[469,350,362],[471,345,370],[485,370,390],[488,367,391],[492,385,410],[495,390,410],[498,385,410],[500,371,395],[505,372,390],[512,385,402],[519,368,390],[523,390,424],[527,405,425],[537,400,436],[544,405,420],[552,395,412],[562,376,400],[574,348,375],[580,343,365],[584,333,350],[587,328,345],[591,328,342],[597,330,348],[600,313,335],[605,272,330],[609,270,300],[614,247,290],[617,275,300],[621,290,312],[627,256,290],[629,285,298]];
const rsi = [[46,624],[49,617],[54,612],[60,610],[66,613],[70,614],[74,618],[78,623],[82,609],[88,608],[93,617],[96,607],[99,608],[103,600],[108,604],[114,604],[118,600],[123,588],[127,593],[132,586],[134,588],[137,582],[141,604],[145,596],[149,599],[153,602],[157,606],[162,608],[166,605],[170,603],[176,597],[181,593],[186,586],[191,580],[195,583],[199,591],[205,596],[209,603],[213,600],[219,597],[223,593],[228,585],[233,582],[235,577],[237,595],[241,608],[245,620],[250,609],[254,606],[257,614],[261,611],[267,612],[272,621],[278,620],[283,622],[286,624],[290,613],[297,607],[302,604],[308,603],[312,614],[317,616],[324,608],[327,612],[333,609],[338,611],[342,607],[347,597],[350,599],[356,598],[361,596],[364,608],[368,615],[372,620],[377,622],[381,614],[386,613],[391,618],[397,618],[401,626],[408,629],[413,618],[418,617],[421,627],[424,632],[429,629],[431,619],[437,620],[441,606],[445,607],[449,611],[454,606],[458,604],[460,602],[465,610],[472,610],[477,615],[481,620],[486,620],[490,626],[496,621],[500,612],[506,615],[511,618],[517,611],[520,609],[524,623],[530,621],[537,620],[542,615],[548,620],[552,608],[556,610],[561,600],[567,603],[573,594],[579,597],[585,594],[591,596],[597,602],[602,590],[608,587],[613,592],[615,585],[617,599],[620,606],[626,606],[629,607]];
// x, usual volume height
const volume = [[45,25],[60,22],[75,14],[90,16],[105,17],[120,18],[137,28],[150,22],[165,12],[185,22],[200,16],[215,16],[230,42],[240,48],[250,30],[265,18],[280,33],[300,30],[310,22],[320,18],[335,13],[350,30],[370,35],[385,14],[400,28],[420,32],[435,28],[460,18],[480,20],[500,15],[520,13],[535,8],[560,14],[580,19],[600,18],[615,28],[629,12]];
// x, height, u(p) / d(own) / m(ixed)
const spikes = [[46,38,'d'],[101,34,'u'],[124,26,'u'],[137,40,'m'],[158,38,'d'],[186,36,'u'],[195,42,'d'],[208,30,'d'],[230,55,'u'],[235,96,'m'],[236,115,'d'],[240,91,'d'],[243,99,'d'],[245,62,'u'],[279,67,'d'],[286,55,'m'],[293,52,'u'],[344,36,'u'],[348,40,'u'],[363,66,'d'],[370,48,'d'],[376,42,'d'],[406,46,'u'],[421,111,'d'],[438,91,'u'],[440,45,'u'],[447,44,'u'],[459,31,'u'],[522,30,'d'],[536,26,'u'],[561,31,'u'],[603,46,'u'],[611,38,'u'],[615,40,'d'],[626,48,'d']];

let seed = 11;
const rand = () => (seed = (seed * 16807) % 2147483647) / 2147483647;

function at(points, x) {
  let i = 1;
  while (i < points.length - 1 && points[i][0] < x) i++;
  const [x0, y0] = points[i - 1], [x1, y1] = points[i];
  return y0 + (y1 - y0) * (x - x0) / (x1 - x0);
}

// curve through the midpoints so the averages look smooth
function smooth(points) {
  let d = 'M' + points[0];
  for (let i = 1; i < points.length - 1; i++) {
    const [x, y] = points[i], [nx, ny] = points[i + 1];
    d += `Q${x} ${y} ${(x + nx) / 2} ${(y + ny) / 2}`;
  }
  return d + 'L' + points[points.length - 1];
}

$('fastMa').setAttribute('d', smooth(fast));
$('slowMa').setAttribute('d', smooth(slow));
$('brightBars').setAttribute('d', wicks.map(([x, a, b]) => `M${x + .5} ${a}V${b}`).join(''));

let dim = '', osc = '';
const vol = { u: '', d: '', m: '' };
for (let x = 46; x < 630; x += 1.56) {
  const y = at(fast, x);
  const slope = Math.abs(at(fast, x + 3) - at(fast, x - 3));
  const size = 4 + rand() * (6 + slope * .5);
  const mid = y + (rand() - .5) * 10;
  dim += `M${x.toFixed(1)} ${(mid - size / 2).toFixed(1)}v${size.toFixed(1)}`;
  osc += (osc ? 'L' : 'M') + x.toFixed(1) + ' ' + (at(rsi, x) + (rand() - .5) * 3).toFixed(1);
  const h = at(volume, x) * (.55 + rand() * .7);
  const kind = 'uudmmm'[Math.floor(rand() * 6)];
  vol[kind] += `M${x.toFixed(1)} 571v-${h.toFixed(1)}`;
}
spikes.forEach(([x, h, kind]) => vol[kind] += `M${x} 571v-${h}`);
$('dimBars').setAttribute('d', dim);
$('rsi').setAttribute('d', osc);
$('volUp').setAttribute('d', vol.u);
$('volDown').setAttribute('d', vol.d);
$('volMix').setAttribute('d', vol.m);

let lines = 'M46 588.5h822', labels = '<text x="875" y="591">80.00</text>';
for (let i = 0; i < 19; i++) {
  const y = Math.round(124 + i * 23.56);
  lines += `M46 ${y + .5}h826`;
  labels += `<text x="875" y="${y + 3}">${14400 - i * 400}.00</text>`;
}
const times = [[79,'10'],[144,'17'],[210,'24'],[276,'Jul'],[340,'8'],[406,'15'],[472,'22'],[566,'Aug'],[669,'12'],[734,'19'],[795,'14:00'],[856,'Sep']];
times.forEach(([x, text]) => {
  lines += `M${x + .5} 107v531`;
  labels += `<text class="mid" x="${x}" y="652">${text}</text>`;
});
$('grid').innerHTML = `<path d="${lines}"/>`;
$('labels').innerHTML = labels;
```
